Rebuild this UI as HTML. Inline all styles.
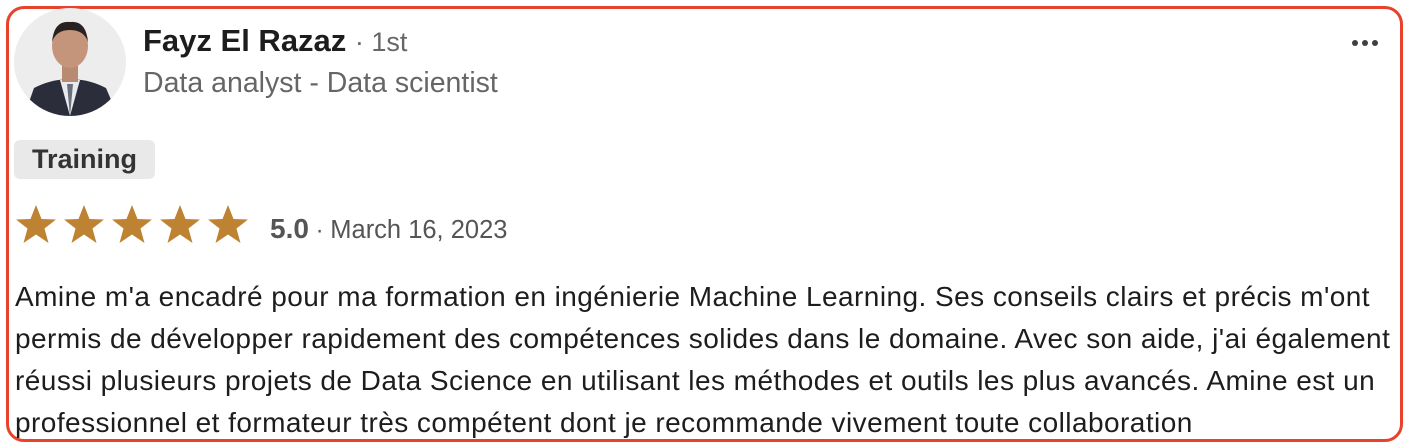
<!DOCTYPE html>
<html><head><meta charset="utf-8"><style>
body{margin:0;width:1422px;height:448px;background:#fff;overflow:hidden;font-family:"Liberation Sans",sans-serif;position:relative}
.card{position:absolute;left:6px;top:6px;width:1391px;height:430px;border:3px solid #e8432a;border-radius:18px}
.av{position:absolute;left:14px;top:8px;width:112px;height:108px;border-radius:50%;background:#ededed;overflow:hidden}
.name{position:absolute;left:143px;top:23px;font-size:31px;font-weight:bold;color:#1d1d1d;white-space:nowrap}
.name span{font-weight:normal;color:#666;font-size:27px}
.sub{position:absolute;left:143px;top:67px;font-size:28.5px;color:#666;white-space:nowrap}
.dots{position:absolute;left:1352px;top:33px}
.dots i{display:inline-block;width:6px;height:6px;border-radius:50%;background:#404040;margin-right:4px}
.tag{position:absolute;left:14px;top:140px;width:141px;height:39px;background:#e9e9e9;border-radius:6px;font-size:27px;font-weight:bold;color:#333;line-height:39px;text-align:center}
.stars{position:absolute;left:14px;top:203px}
.rt{position:absolute;left:270px;top:213px;color:#555;white-space:nowrap;font-size:24px}
.rt b{font-size:28px}
.rt span{font-size:25.5px}
.txt{position:absolute;left:15px;top:276px;font-size:28px;letter-spacing:0.45px;line-height:42px;color:#1d1d1d;white-space:nowrap}
</style></head><body>
<div class="card"></div>
<div class="av"><svg width="112" height="108" viewBox="0 0 112 108">
<path d="M10 108 L20 80 Q40 70 56 72 Q72 70 92 80 L104 108Z" fill="#2b2e3a"/>
<path d="M46 72 L56 108 L66 72Z" fill="#e8eaef"/>
<path d="M53 76 L56 108 L59 76Z" fill="#6a6f7c"/>
<rect x="48" y="50" width="16" height="24" fill="#b88a70"/>
<ellipse cx="56" cy="38" rx="18" ry="22" fill="#c4957a"/>
<path d="M38 34 Q40 12 56 14 Q72 12 74 34 Q70 22 56 22 Q42 22 38 34Z" fill="#2a2220"/>
</svg></div>
<div class="name">Fayz El Razaz <span>· 1st</span></div>
<div class="sub">Data analyst - Data scientist</div>
<div class="dots"><i></i><i></i><i></i></div>
<div class="tag">Training</div>
<div class="stars"><svg width="240" height="44" viewBox="0 0 240 44">
<defs><path id="s" d="M22 2 L27.5 16 L42 16.5 L30.5 25.5 L34.5 40 L22 31.5 L9.5 40 L13.5 25.5 L2 16.5 L16.5 16Z" fill="#bd8232"/></defs>
<use href="#s" x="0"/><use href="#s" x="48"/><use href="#s" x="96"/><use href="#s" x="144"/><use href="#s" x="192"/>
</svg></div>
<div class="rt"><b>5.0</b> · <span>March 16, 2023</span></div>
<div class="txt">Amine m'a encadré pour ma formation en ingénierie Machine Learning. Ses conseils clairs et précis m'ont<br>permis de développer rapidement des compétences solides dans le domaine. Avec son aide, j'ai également<br>réussi plusieurs projets de Data Science en utilisant les méthodes et outils les plus avancés. Amine est un<br>professionnel et formateur très compétent dont je recommande vivement toute collaboration</div>
</body></html>
